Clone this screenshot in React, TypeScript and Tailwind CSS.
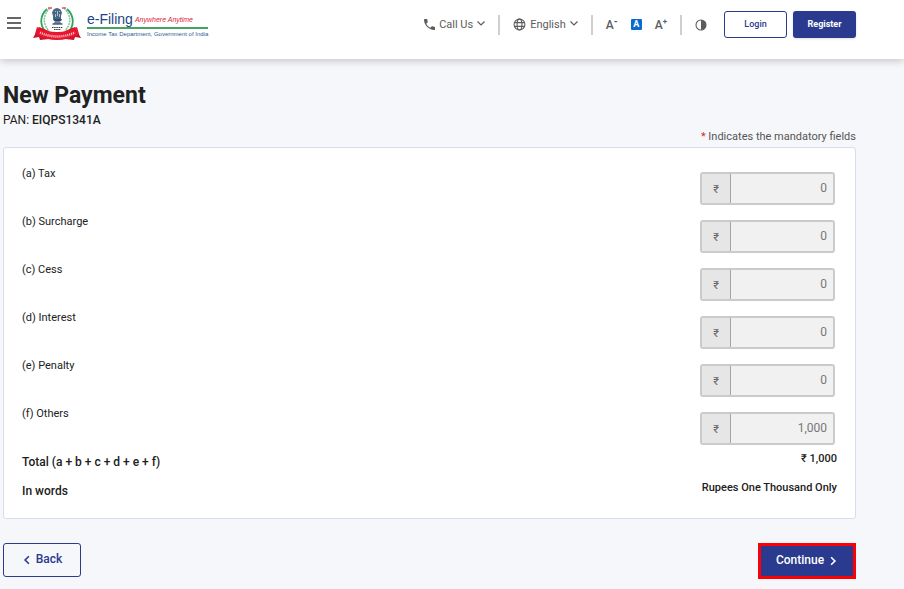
import React from 'react';

interface TaxField {
  id: string;
  label: string;
  value: string;
}

const taxFields: TaxField[] = [
  { id: 'tax', label: '(a) Tax', value: '0' },
  { id: 'surcharge', label: '(b) Surcharge', value: '0' },
  { id: 'cess', label: '(c) Cess', value: '0' },
  { id: 'interest', label: '(d) Interest', value: '0' },
  { id: 'penalty', label: '(e) Penalty', value: '0' },
  { id: 'others', label: '(f) Others', value: '1,000' }
];

function Emblem() {
  return (
    <svg viewBox="0 0 48 34" className="h-[34px] w-12 shrink-0" aria-hidden="true">
      <path d="M14 2C6 9 7 19 13 25" fill="none" stroke="#2fa35c" strokeWidth="1.800" />
      <path d="M34 2c8 7 7 18 1 23" fill="none" stroke="#2fa35c" strokeWidth="1.800" />
      <path d="M17 1c-8 8-7 16-1 23M31 1c8 8 7 16 1 23" fill="none" stroke="#79c495" strokeWidth="1.500" strokeDasharray="2 .8" />
      <path d="M15 1h4M29 1h4" stroke="#e05565" strokeWidth="1.600" />
      {/* lion capital */}
      <path d="M20.500 2.500q3.500-3 7 0l1.500 3-1 3.500v3h-8V9l-1-3.500z" fill="#4a6583" />
      <path d="M22 4l1 1M26 5l1-1M24.500 4v5M22.500 7v3M26.500 7v3" stroke="#c7d3df" strokeWidth="0.800" />
      <path d="M20 12h9l-1 2h-7z" fill="#2f4b6c" />
      <path d="M22 14h5l1.500 3h-8z" fill="#6c86a1" />
      <path d="M19.500 17h10" stroke="#3b5878" strokeWidth="1.400" />
      <path d="M19 20.500h11M21 22.500h7" stroke="#333" strokeWidth="1.100" strokeDasharray="1.500 .7" />
      {/* ribbon */}
      <path d="M6 20l-6 11 6-1 1 3 9-1V24z" fill="#c9142c" />
      <path d="M42 20l6 11-6-1-1 3-9-1V24z" fill="#c9142c" />
      <path d="M4 20Q24 30 44 20l2 7Q24 39 2 27z" fill="#e8152e" />
      <path d="M7 25.500Q24 33.500 42 25.500" fill="none" stroke="#fbd5da" strokeWidth="2.400" strokeDasharray="1 1" />
    </svg>
  );
}

function PhoneIcon() {
  return (
    <svg viewBox="3 3 18 18" className="size-[11px]" fill="currentColor" aria-hidden="true">
      <path d="M20 15.500c-1.250 0-2.450-.2-3.570-.57-.35-.11-.74-.03-1.020.24l-2.200 2.200c-2.830-1.440-5.150-3.750-6.590-6.590l2.200-2.200c.28-.28.36-.67.25-1.020C8.700 6.450 8.500 5.250 8.500 4c0-.55-.45-1-1-1H4c-.55 0-1 .45-1 1 0 9.390 7.610 17 17 17 .55 0 1-.45 1-1v-3.500c0-.55-.45-1-1-1z" />
    </svg>
  );
}

function GlobeIcon() {
  return (
    <svg viewBox="0 0 24 24" className="size-[13px]" fill="none" stroke="currentColor" strokeWidth="2" aria-hidden="true">
      <circle cx="12" cy="12" r="10" />
      <ellipse cx="12" cy="12" rx="4.500" ry="10" />
      <path d="M3 8.500h18M3 15.500h18" />
    </svg>
  );
}

function ContrastIcon() {
  return (
    <svg viewBox="0 0 24 24" className="size-3" aria-hidden="true">
      <circle cx="12" cy="12" r="10" fill="none" stroke="currentColor" strokeWidth="2.200" />
      <path d="M12 2a10 10 0 0 1 0 20z" fill="currentColor" />
    </svg>
  );
}

function ChevronDown() {
  return (
    <svg viewBox="0 0 8 8" className="size-2 mb-1" fill="none" stroke="currentColor" strokeWidth="1.200" aria-hidden="true">
      <path d="M.5 2.500L4 6l3.500-3.500" />
    </svg>
  );
}

function Divider() {
  return <span className="h-5 w-0.5 bg-[#cfcfcf]" />;
}

function Header() {
  return (
    <header className="relative bg-white shadow-[0_2px_8px_rgba(0,0,0,0.2)] flex items-start justify-between pl-[7px] pr-12 pt-[7px] pb-[18px]">
      <div className="flex items-center gap-3">
        <button type="button" aria-label="Menu" className="flex flex-col gap-[3px] -mt-0.5">
          <span className="h-0.5 w-3.5 bg-[#666]" />
          <span className="h-0.5 w-3.5 bg-[#666]" />
          <span className="h-0.5 w-3.5 bg-[#666]" />
        </button>
        <a href="#" className="flex items-start gap-1.5">
          <Emblem />
          <span className="flex flex-col pt-1 font-['Liberation_Sans',sans-serif] whitespace-nowrap">
            <span className="flex items-center gap-0.5 border-b-2 border-[#45a35f] leading-4 text-[#1c4587]">
              <span className="text-[14px]">e-Filing</span>
              <span className="pt-0.5 text-[7px] leading-3 italic text-[#e0263c]">Anywhere Anytime</span>
            </span>
            <span className="text-[6px] leading-[10px] text-[#1f5c93]">
              Income Tax Department, Government of India
            </span>
          </span>
        </a>
      </div>

      <div className="flex items-center gap-[13px] pt-1 text-[11px] text-[#5c5c5c]">
        <button type="button" className="flex items-center gap-1">
          <PhoneIcon />
          <span className="pt-0.5">Call Us</span>
          <ChevronDown />
        </button>
        <Divider />
        <button type="button" className="flex items-center gap-1">
          <GlobeIcon />
          <span className="pt-0.5">English</span>
          <ChevronDown />
        </button>
        <Divider />
        <button type="button" aria-label="Decrease text size" className="flex items-start text-[12px] leading-3 font-medium">
          A<span className="text-[10px] leading-[6px] font-bold">-</span>
        </button>
        <button type="button" aria-label="Normal text size" className="size-[11px] rounded-[1px] bg-[#0a6bd0] text-white text-[9px] leading-[11px] font-bold">
          A
        </button>
        <button type="button" aria-label="Increase text size" className="flex items-start text-[12px] leading-3 font-medium">
          A<span className="text-[8px] leading-[6px] font-bold">+</span>
        </button>
        <Divider />
        <button type="button" aria-label="Contrast">
          <ContrastIcon />
        </button>
        <div className="flex gap-1.5 pl-1">
          <button type="button" className="h-[27px] w-[63px] rounded-[3px] border border-[#2a3a8e] text-[9px] font-medium text-[#2a3a8e]">
            Login
          </button>
          <button type="button" className="h-[27px] w-[63px] rounded-[3px] bg-[#2a3a8e] text-[9px] font-bold text-white shadow-sm">
            Register
          </button>
        </div>
      </div>
    </header>
  );
}

export default function App() {
  return (
    <div className="min-h-screen bg-[#f5f7fb] font-[Roboto,sans-serif] text-[#212121]">
      <Header />
      <main className="pl-[3px] pr-12 pt-5 pb-2.5">
        <h1 className="text-[23px] leading-[34px] font-bold">New Payment</h1>
        <p className="text-[12px] leading-[14px]">
          PAN: <span className="font-medium">EIQPS1341A</span>
        </p>
        <p className="text-right text-[11px] leading-5 text-[#555]">
          <span className="text-[#d32f2f]">*</span> Indicates the mandatory fields
        </p>

        <section className="rounded-[3px] border border-[#d9dcec] bg-white px-[18px] pt-4 pb-[18px]">
          {taxFields.map((field) => (
            <div key={field.id} className="flex h-12 items-start justify-between text-[11px]">
              <label htmlFor={field.id} className="leading-5">
                {field.label}
              </label>
              <div className="mt-2 mr-0.5 flex h-[33px] w-[135px] overflow-hidden rounded-[3px] border-2 border-[#cbcbcb] bg-[#f1f1f1] text-[#666]">
                <span className="flex w-[29px] shrink-0 items-center justify-center border-r border-[#a5a5a5] bg-[#e6e6e6] pt-1">
                  ₹
                </span>
                <input
                  id={field.id}
                  type="text"
                  value={field.value}
                  disabled
                  className="min-w-0 flex-1 pr-1.5 pb-0.5 text-right text-[12px] text-[#777]"
                />
              </div>
            </div>
          ))}
          <div className="flex flex-col gap-2.5 font-medium">
            <div className="flex items-start justify-between">
              <span className="text-[12px] leading-5">Total (a + b + c + d + e + f)</span>
              <span className="text-[11px] leading-3.5">₹ 1,000</span>
            </div>
            <div className="flex items-start justify-between">
              <span className="text-[12px] leading-[18px]">In words</span>
              <span className="text-[11px] leading-3">Rupees One Thousand Only</span>
            </div>
          </div>
        </section>

        <div className="mt-6 flex items-start justify-between text-[12px] font-medium">
          <button type="button" className="flex h-[34px] w-[78px] items-center justify-center gap-1 rounded-[3px] border border-[#2a3a8e] pb-0.5 text-[#2a3a8e]">
            <svg viewBox="0 0 8 8" className="mt-0.5 size-2.5" fill="none" stroke="currentColor" strokeWidth="1.300" aria-hidden="true">
              <path d="M5.500 1l-3 3 3 3" />
            </svg>
            Back
          </button>
          <button type="button" className="flex h-9 w-[98px] items-center justify-center gap-1 border-[3px] border-[#fb0007] bg-[#2a3a8e] pb-0.5 text-white">
            Continue
            <svg viewBox="0 0 8 8" className="mt-0.5 size-2.5" fill="none" stroke="currentColor" strokeWidth="1.300" aria-hidden="true">
              <path d="M2.500 1l3 3-3 3" />
            </svg>
          </button>
        </div>
      </main>
    </div>
  );
}
